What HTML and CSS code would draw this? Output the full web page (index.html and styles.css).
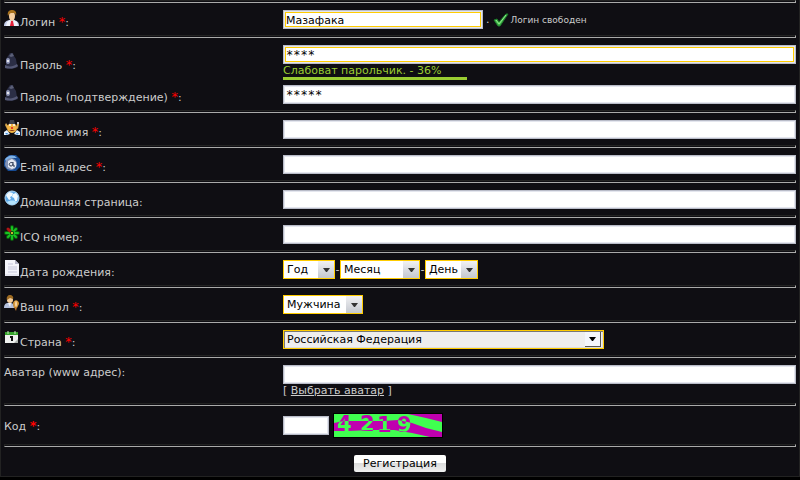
FILE: index.html
```html
<!DOCTYPE html>
<html lang="ru">
  <head>
    <meta charset="utf-8">
    <title>Регистрация</title>
    <link rel="stylesheet" href="styles.css">
  </head>
  <body>
    <form class="panel" onsubmit="return false">
      <hr class="line">
      <div class="row">
        <label class="name" for="login">
          <svg class="icon" viewBox="0 0 16 16">
            <path d="M0 16c0-4 2-5 5-6h5c3 1 5 2 5 6z" fill="#c3cbe8"/>
            <path d="M3 12l3-2 2 3 2-3 3 2 1 4H2z" fill="#eef1fb"/>
            <path d="M7 11h2l1 5H6z" fill="#e0203a"/>
            <ellipse cx="8" cy="6" rx="3" ry="5" fill="#f7cfa0"/>
            <path d="M4 6c-1-4 1-6 4-6s5 2 4 6l-1-3-4 0-2 1z" fill="#a8711c"/>
          </svg>
          <span>Логин <b class="req">*</b>:</span>
        </label>
        <div class="field line-field">
          <input type="text" id="login" class="text short active" value="Мазафака">
          <span class="dot">.</span>
          <svg class="check" viewBox="0 0 16 16">
            <path d="M1 8l3-1 2 3 7-8 2 0-8 12H5z" fill="#42b84a" stroke="#1d7a2b"/>
            <path d="M3 8l3 4 7-9" fill="none" stroke="#8fe88a"/>
          </svg>
          <span class="status">Логин свободен</span>
        </div>
      </div>

      <hr class="line">
      <div class="row password-row">
        <label class="name" for="pass">
          <svg class="icon" viewBox="0 0 16 16">
            <path d="M2 12V6l2-3 2-3h3l1 3 2 3 1 6 1 2-6 2-7-1z" fill="#2b2e45"/>
            <path d="M1 12c3 2 8 2 12-1l1 2c-4 3-9 3-13 2z" fill="#555975"/>
            <path d="M5 3l3-3 2 3-3 1z" fill="#5c6078"/>
            <ellipse cx="4" cy="8" rx="2" ry="3" fill="#8f95b5"/>
            <circle cx="4" cy="8" r="1" fill="#fff"/>
          </svg>
          <span>Пароль <b class="req">*</b>:</span>
        </label>
        <div class="field">
          <input type="text" id="pass" class="text stars active" value="****" autocomplete="off">
          <div class="strength">Слабоват парольчик. - 36%</div>
        </div>
      </div>
      <div class="row repeat-row">
        <label class="name" for="pass2">
          <svg class="icon" viewBox="0 0 16 16">
            <path d="M2 12V6l2-3 2-3h3l1 3 2 3 1 6 1 2-6 2-7-1z" fill="#2b2e45"/>
            <path d="M1 12c3 2 8 2 12-1l1 2c-4 3-9 3-13 2z" fill="#555975"/>
            <path d="M5 3l3-3 2 3-3 1z" fill="#5c6078"/>
            <ellipse cx="4" cy="8" rx="2" ry="3" fill="#8f95b5"/>
            <circle cx="4" cy="8" r="1" fill="#fff"/>
          </svg>
          <span>Пароль (подтверждение) <b class="req">*</b>:</span>
        </label>
        <div class="field">
          <input type="text" id="pass2" class="text stars" value="*****" autocomplete="off">
        </div>
      </div>

      <hr class="line">
      <div class="row">
        <label class="name" for="fullname">
          <svg class="icon" viewBox="0 0 16 16">
            <path d="M3 9L1 5l1-2 3 4zM12 8l1-4 2 0-1 5z" fill="#d9a84e"/>
            <circle cx="14" cy="3" r="1" fill="#fff"/>
            <circle cx="8" cy="8" r="5" fill="#f3b545"/>
            <path d="M5 4l1-4h4l1 4z" fill="#3f434c"/>
            <circle cx="6" cy="5" r="1" fill="#fff"/>
            <circle cx="10" cy="5" r="1" fill="#fff"/>
            <circle cx="8" cy="8" r="1" fill="#e01818"/>
            <path d="M5 10h6l-2 1H7z" fill="#8d3c17"/>
            <path d="M0 12l3-2 3 4-3 1H0zM16 12l-3-2-3 4 3 1h3z" fill="#e6f2ff"/>
            <path d="M1 13h3l-1 2zM15 13h-3l1 2z" fill="#4b95dd"/>
          </svg>
          <span>Полное имя <b class="req">*</b>:</span>
        </label>
        <div class="field">
          <input type="text" id="fullname" class="text">
        </div>
      </div>

      <hr class="line">
      <div class="row">
        <label class="name" for="email">
          <svg class="icon" viewBox="0 0 16 16">
            <path d="M0 5l5-5h7l4 4v8l-4 4H4l-4-5z" fill="#164a92"/>
            <path d="M1 4c3-4 9-5 12-1L8 3 3 9z" fill="#7eb2e8"/>
            <circle cx="7" cy="9" r="6" fill="#8292b4"/>
            <path d="M4 6l4-2 4 3v5l-4 2-4-2z" fill="#e3e8f1"/>
            <path d="M9 7v4h2M9 8c-4-2-5 3-2 3 1 0 2-1 2-2" fill="none" stroke="#26324d"/>
          </svg>
          <span>E-mail адрес <b class="req">*</b>:</span>
        </label>
        <div class="field">
          <input type="text" id="email" class="text">
        </div>
      </div>

      <hr class="line">
      <div class="row">
        <label class="name" for="homepage">
          <svg class="icon" viewBox="0 0 16 16">
            <circle cx="8" cy="8" r="7" fill="#5fa9e8" stroke="#b5daf7"/>
            <path d="M2 5l3-3 4 1-1 3-2 1 1 2-2 1-2-3zM9 4l3-1 2 3-1 5-2 0-1-3-2-1z" fill="#f1faff"/>
            <path d="M3 12c3-2 7-2 10 0-2 3-7 4-10 0z" fill="#b5e4ff"/>
          </svg>
          <span>Домашняя страница:</span>
        </label>
        <div class="field">
          <input type="text" id="homepage" class="text">
        </div>
      </div>

      <hr class="line">
      <div class="row">
        <label class="name" for="icq">
          <svg class="icon" viewBox="0 0 16 16">
            <g stroke="#0a5a0e" stroke-width="4" stroke-linecap="round">
              <path d="M8 8V2M8 8v6M8 8H2M8 8h6M8 8l4-4M8 8l4 4M8 8l-4 4"/>
            </g>
            <g stroke="#18c422" stroke-width="2" stroke-linecap="round">
              <path d="M8 6V2M8 10v4M6 8H2M10 8h4M10 6l2-2M10 10l2 2M6 10l-2 2"/>
            </g>
            <path d="M6 6L4 4" stroke="#b01414" stroke-width="3" stroke-linecap="round"/>
            <circle cx="8" cy="8" r="2" fill="#123a10"/>
            <circle cx="8" cy="8" r="1" fill="#ffe936"/>
          </svg>
          <span>ICQ номер:</span>
        </label>
        <div class="field">
          <input type="text" id="icq" class="text">
        </div>
      </div>

      <hr class="line">
      <div class="row">
        <label class="name" for="year">
          <svg class="icon" viewBox="0 0 16 16">
            <path d="M1 0h10l4 4v12H1z" fill="#f4f4fa"/>
            <path d="M11 0l4 4h-4z" fill="#b4b4c8"/>
            <path d="M4 4h5M4 7h9M4 9h9M4 12h9" stroke="#c6c6da"/>
            <path d="M1 15h14" stroke="#d5d5e2"/>
          </svg>
          <span>Дата рождения:</span>
        </label>
        <div class="field line-field">
          <select id="year" class="pick year" aria-label="Год"><option>Год</option></select>
          <span class="dash">-</span>
          <select class="pick month" aria-label="Месяц"><option>Месяц</option></select>
          <span class="dash">-</span>
          <select class="pick day" aria-label="День"><option>День</option></select>
        </div>
      </div>

      <hr class="line">
      <div class="row">
        <label class="name" for="gender">
          <svg class="icon" viewBox="0 0 16 16">
            <path d="M0 13c0-4 2-5 4-5h3c2 0 3 2 3 5z" fill="#b4c0dc"/>
            <path d="M4 8h3l-1 4z" fill="#f3f5fb"/>
            <circle cx="6" cy="5" r="3" fill="#f5cd9b"/>
            <path d="M3 5c-1-3 1-5 3-5s4 2 3 4L6 3z" fill="#9c6a22"/>
            <path d="M9 9c0-5 6-5 6 0l-2 4h-3z" fill="#d69a3c"/>
            <ellipse cx="12" cy="9" rx="1" ry="3" fill="#f8d5a5"/>
            <path d="M10 12h3l-1 4z" fill="#c07a2a"/>
          </svg>
          <span>Ваш пол <b class="req">*</b>:</span>
        </label>
        <div class="field">
          <select id="gender" class="pick gender"><option>Мужчина</option></select>
        </div>
      </div>

      <hr class="line">
      <div class="row">
        <label class="name" for="country">
          <svg class="icon" viewBox="0 0 16 16">
            <path d="M1 2h13v11H1z" fill="#f0f2f0"/>
            <path d="M1 2h13v3H1z" fill="#36a42c"/>
            <path d="M4 1v3M11 1v3" stroke="#c8e8c0"/>
            <path d="M6 7h2v4" fill="none" stroke="#111" stroke-width="2"/>
            <path d="M10 13l4-4v4z" fill="#aeb4ae"/>
          </svg>
          <span>Страна <b class="req">*</b>:</span>
        </label>
        <div class="field">
          <select id="country" class="pick country"><option>Российская Федерация</option></select>
        </div>
      </div>

      <hr class="line">
      <div class="row avatar-row">
        <label class="name plain" for="avatar">Аватар (www адрес):</label>
        <div class="field">
          <input type="text" id="avatar" class="text">
          <div class="choose">[ <a href="#">Выбрать аватар</a> ]</div>
        </div>
      </div>

      <hr class="line">
      <div class="row code-row">
        <label class="name plain" for="code"><span>Код <b class="req bold">*</b>:</span></label>
        <div class="field line-field">
          <input type="text" id="code" class="text code">
          <svg class="captcha" viewBox="0 0 108 23">
            <rect width="108" height="23" fill="#40ff50"/>
            <path d="M0 9L10 7H50L64 6 78 9 92 14 108 18V23H96L78 19 60 16H36L14 17H0z" fill="#bf00af"/>
            <path d="M74 0H108V8L92 4z" fill="#bf00af"/>
            <g class="digits">
              <text x="3" y="17">4</text>
              <text x="26" y="17">2</text>
              <text x="43" y="18">1</text>
              <text x="63" y="18">9</text>
            </g>
          </svg>
        </div>
      </div>

      <hr class="line">
      <div class="actions">
        <button type="submit" class="send">Регистрация</button>
      </div>
    </form>
  </body>
</html>
```
FILE: styles.css
```css
* {
  box-sizing: border-box;
}

body {
  margin: 0;
  background: #000;
  color: #ccc;
  font: 11px/14px Verdana, "DejaVu Sans", sans-serif;
}

input,
select,
button {
  margin: 0;
  color: #000;
  font: inherit;
}

.panel {
  padding: 0 3px;
  background: #0f0e13;
  border: 1px solid #222;
  border-top: 0;
}

.line {
  height: 3px;
  margin: 0;
  border: 1px solid;
  border-color: #222 #aaa #aaa #222;
}

.row {
  display: grid;
  grid-template-columns: 279px 1fr;
  align-items: start;
  padding: 7px 0 6px;
}

.name {
  display: flex;
  align-items: flex-start;
}

.name span {
  padding-top: 6px;
  line-height: 13px;
}

.icon {
  width: 16px;
  height: 16px;
}

.req {
  color: #f00;
  font-size: 13px;
  font-weight: normal;
  line-height: 0;
}

.req.bold {
  font-weight: bold;
}

.field {
  display: flex;
  flex-direction: column;
  align-items: flex-start;
}

.line-field {
  flex-direction: row;
  align-items: center;
}

.text {
  width: 100%;
  height: 19px;
  padding: 1px 2px 0;
  background: #fff;
  border: 1px solid #b9bcc8;
  box-shadow: inset 0 0 0 1px #e4e6ee;
}

.text.active {
  box-shadow: inset 0 0 0 1px #e4e6ee, inset 0 0 0 2px #fc0;
}

.text.short {
  width: 200px;
}

/* the mask is drawn with plain asterisks */
.text.stars {
  font-family: "DejaVu Sans Mono", monospace;
  font-size: 12px;
}

.dot {
  margin: 0 3px;
}

.check {
  width: 16px;
  height: 16px;
  margin-right: 2px;
}

.status {
  font-size: 9px;
}

.password-row {
  padding-bottom: 0;
}

.password-row .name {
  padding-top: 8px;
}

.strength {
  width: 184px;
  color: #9acd32;
  border-bottom: 3px solid #9acd32;
  line-height: 13px;
}

.repeat-row {
  padding-top: 5px;
}

/* drop-downs */
.pick {
  height: 19px;
  padding: 1px 16px 0 3px;
  background:
    url("data:image/svg+xml,%3Csvg xmlns='http://www.w3.org/2000/svg' width='7' height='4'%3E%3Cpath d='M0 0h7L4 4H3z' fill='%23333'/%3E%3C/svg%3E") no-repeat right 4px center,
    linear-gradient(#f1f1f3, #c4c8cf) no-repeat right top / 16px 100%,
    #fff;
  border: 1px solid #fc0;
  border-radius: 0;
  appearance: none;
}

.year {
  width: 52px;
}

.month {
  width: 80px;
}

.day {
  width: 53px;
}

.gender {
  width: 80px;
}

.dash {
  width: 5px;
  text-align: center;
}

.country {
  width: 321px;
  background:
    url("data:image/svg+xml,%3Csvg xmlns='http://www.w3.org/2000/svg' width='16' height='15'%3E%3Cpath d='M0 0h16v15H0z' fill='%23555'/%3E%3Cpath d='M0 0h15v14H0z' fill='%23f4f6fb'/%3E%3Cpath d='M4 5h7L8 9H7z' fill='%23000'/%3E%3C/svg%3E") no-repeat right 2px center,
    #eee;
  box-shadow: inset 1px 1px 0 #777, inset -1px -1px 0 #ddd;
}

/* avatar and code */
.name.plain {
  padding-top: 1px;
}

.name.plain span {
  padding-top: 0;
}

.avatar-row {
  padding-bottom: 5px;
}

.choose a {
  color: #ccc;
}

.code-row {
  align-items: center;
}

.text.code {
  width: 46px;
}

.captcha {
  width: 110px;
  height: 25px;
  margin-left: 4px;
  border: 1px solid #000;
  isolation: isolate;
}

.digits {
  fill: #fff;
  font: bold 21px "DejaVu Sans", sans-serif;
  mix-blend-mode: difference;
}

.actions {
  display: flex;
  justify-content: center;
  padding: 8px 0 4px;
}

.send {
  height: 17px;
  padding: 0 9px;
  background: linear-gradient(#fff 50%, #dcdcdc 50%, #f0f0f0);
  border: 0;
  border-radius: 2px;
  line-height: 17px;
}
```
